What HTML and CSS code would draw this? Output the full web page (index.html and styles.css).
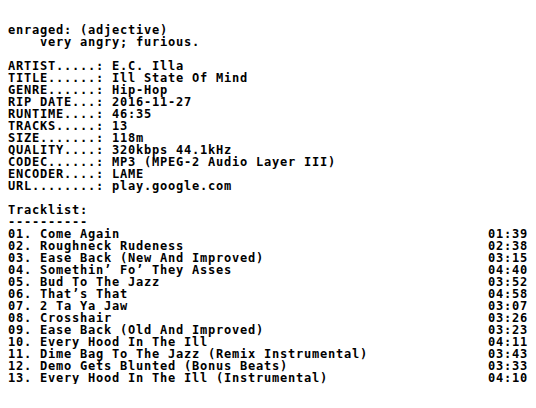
FILE: index.html
```html
<!DOCTYPE html>
<html lang="en">
<head>
<meta charset="utf-8">
<title>E.C. Illa - Ill State Of Mind</title>
<link rel="stylesheet" href="styles.css">
</head>
<body>
<main class="nfo">
  <section class="block">
    <div class="line">enraged: (adjective)</div>
    <div class="line">    very angry; furious.</div>
  </section>
  <section class="block">
    <div class="line">ARTIST.....: E.C. Illa</div>
    <div class="line">TITLE......: Ill State Of Mind</div>
    <div class="line">GENRE......: Hip-Hop</div>
    <div class="line">RIP DATE...: 2016-11-27</div>
    <div class="line">RUNTIME....: 46:35</div>
    <div class="line">TRACKS.....: 13</div>
    <div class="line">SIZE.......: 118m</div>
    <div class="line">QUALITY....: 320kbps 44.1kHz</div>
    <div class="line">CODEC......: MP3 (MPEG-2 Audio Layer III)</div>
    <div class="line">ENCODER....: LAME</div>
    <div class="line">URL........: play.google.com</div>
  </section>
  <section class="block">
    <div class="line">Tracklist:</div>
    <div class="line">----------</div>
    <ol class="tracks">
      <li class="track"><span>01. Come Again</span><span>01:39</span></li>
      <li class="track"><span>02. Roughneck Rudeness</span><span>02:38</span></li>
      <li class="track"><span>03. Ease Back (New And Improved)</span><span>03:15</span></li>
      <li class="track"><span>04. Somethin’ Fo’ They Asses</span><span>04:40</span></li>
      <li class="track"><span>05. Bud To The Jazz</span><span>03:52</span></li>
      <li class="track"><span>06. That’s That</span><span>04:58</span></li>
      <li class="track"><span>07. 2 Ta Ya Jaw</span><span>03:07</span></li>
      <li class="track"><span>08. Crosshair</span><span>03:26</span></li>
      <li class="track"><span>09. Ease Back (Old And Improved)</span><span>03:23</span></li>
      <li class="track"><span>10. Every Hood In The Ill</span><span>04:11</span></li>
      <li class="track"><span>11. Dime Bag To The Jazz (Remix Instrumental)</span><span>03:43</span></li>
      <li class="track"><span>12. Demo Gets Blunted (Bonus Beats)</span><span>03:33</span></li>
      <li class="track"><span>13. Every Hood In The Ill (Instrumental)</span><span>04:10</span></li>
    </ol>
  </section>
</main>
</body>
</html>
```
FILE: styles.css
```css
html, body {
  margin: 0;
  padding: 0;
  background: #ffffff;
}

body {
  color: #000000;
  font-family: "DejaVu Sans Mono", "Liberation Mono", monospace;
  font-weight: bold;
  font-size: 12px;
  line-height: 12px;
  letter-spacing: 0.776px;
}

.nfo {
  padding: 24px 8px 0 8px;
  display: flex;
  flex-direction: column;
  gap: 12px;
}

.block {
  display: flex;
  flex-direction: column;
}

.line {
  white-space: pre;
  height: 12px;
}

.tracks {
  list-style: none;
  margin: 0;
  padding: 0;
  width: 520px;
}

.track {
  display: flex;
  justify-content: space-between;
  white-space: pre;
  height: 12px;
}
```
